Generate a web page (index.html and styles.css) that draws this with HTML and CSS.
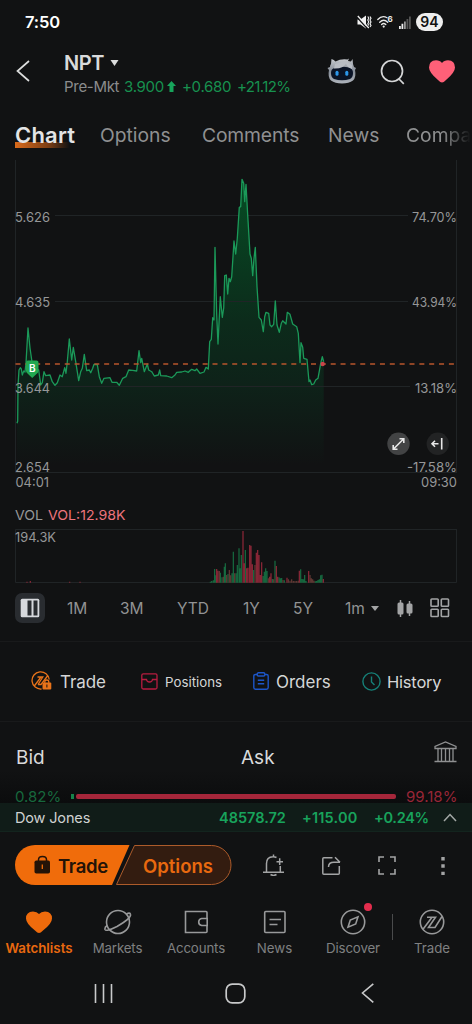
FILE: index.html
```html
<!DOCTYPE html>
<html lang="en">
<head>
<meta charset="utf-8">
<title>NPT</title>
<link rel="stylesheet" href="styles.css">
</head>
<body>
<div class="screen">
  <header class="status">
    <span class="clock">7:50</span>
    <svg class="st-mute" width="15" height="14" viewBox="0 0 15 14"><path d="M.5 4.500h3L9 .5v13L3.500 9.500h-3z" fill="#f2f2f2"/><path d="M0 2.200l10 11" stroke="#111213" stroke-width="1.300"/><path d="M.8 1l11 12" stroke="#f2f2f2" stroke-width="1.300"/><path d="M10.800 1.500l1 1.800-1 1.800 1 1.800-1 1.800 1 1.800M13 1.500l1 1.800-1 1.800 1 1.800-1 1.800 1 1.800-1 1.500" stroke="#f2f2f2" stroke-width="1.100" fill="none"/></svg>
    <svg class="st-wifi" width="16" height="14" viewBox="0 0 16 14"><g fill="none" stroke="#e8e8e8" stroke-width="1.300" stroke-linecap="round"><path d="M.8 4.500Q5-.2 10 2.700M2.700 7.200q4-3.800 8 0M4.600 9.500q2.100-1.900 4.200 0"/></g><circle cx="6.700" cy="11.600" r="1.100" fill="#e8e8e8"/><text x="10.500" y="6.800" class="wifi-six">6</text></svg>
    <svg class="st-signal" width="12" height="13" viewBox="0 0 12 13"><path d="M0 10h1.800v3H0zM2.500 7.800h1.800V13H2.500z" fill="#eee"/><path d="M5 5.500h1.800V13H5z" fill="#999"/><path d="M7.500 3h1.800v10H7.500zM10 .5h1.800V13H10z" fill="#555"/></svg>
    <span class="battery">94</span>
  </header>

  <section class="head">
    <svg class="back" width="14" height="22" viewBox="0 0 14 22"><path d="M13 1L1.500 11 13 21" fill="none" stroke="#dcdddd" stroke-width="1.700"/></svg>
    <div class="quote">
      <div class="symbol">NPT<svg width="9" height="6" viewBox="0 0 9 6"><path d="M.5 0h8L4.500 6z" fill="#dcdddd"/></svg></div>
      <div class="price"><span class="mkt">Pre-Mkt</span><span class="last">3.900</span><svg width="9" height="11" viewBox="0 0 9 11"><path d="M4.500 0L9 5H6.500v6h-4V5H0z" fill="#17a45b"/></svg><span class="chg">+0.680</span><span class="pct">+21.12%</span></div>
    </div>
    <svg class="robot" width="30" height="26" viewBox="0 0 30 26">
      <defs><linearGradient id="shell" x1="0" x2="0" y1="0" y2="1"><stop offset="0" stop-color="#c9ccd1"/><stop offset=".5" stop-color="#868d98"/><stop offset="1" stop-color="#aeb3bb"/></linearGradient></defs>
      <path d="M3 9Q3 7 4 6L4.500 1Q7 1.500 8.500 3.500 14 .5 20.500 1.500L22 .5 21 3 24 3.500 25.500 1 26 6 27 9l2 1-1 2q1.500 7-2 10.500Q22 25.500 15 25.500T4 22.500Q.5 19 2 12L.5 10z" fill="url(#shell)"/>
      <path d="M8 10Q15 8 22 9.500q4 1 4 5.500t-3 6q-8 2.500-16 0-3-1.500-3-6t4-5z" fill="#0a1326"/>
      <path d="M7 10.500q9 .5 12-5 1 4 6 5.500V7L19 3 8 6z" fill="#b9bdc4"/>
      <rect x="8.500" y="12.800" width="3" height="5" rx="1.500" fill="#2b96ea"/><rect x="18.300" y="12.800" width="3" height="5" rx="1.500" fill="#2b96ea"/>
    </svg>
    <svg class="search" width="25" height="26" viewBox="0 0 25 26"><g fill="none" stroke="#d5d6d7" stroke-width="1.700"><circle cx="12" cy="12" r="10.500"/><path d="M18.500 19.500l5.300 5.300"/></g></svg>
    <svg class="fav" width="26" height="23" viewBox="0 0 26 23"><path d="M13 22.500Q11.500 22.500 9 20 0 12.500 0 7.500 0 .5 7 .2 11 .2 13 3 15 .2 19 .2 26 .5 26 7.500 26 12.500 17 20 14.500 22.500 13 22.500z" fill="#ff6078"/></svg>
  </section>

  <nav class="tabs">
    <span class="tab tab-on">Chart</span><span class="tab t-opt">Options</span><span class="tab t-com">Comments</span><span class="tab t-news">News</span><span class="tab t-comp">Company</span>
  </nav>

  <svg class="chart" width="472" height="430" viewBox="0 160 472 430">
    <defs>
      <linearGradient id="fill" gradientUnits="userSpaceOnUse" x1="0" x2="0" y1="180" y2="465"><stop offset="0" stop-color="#064c24"/><stop offset=".5" stop-color="#0c2b1b"/><stop offset=".72" stop-color="#0e2219"/><stop offset="1" stop-color="#111213"/></linearGradient>
    </defs>
    <g class="grid"><path d="M15.500 160V472.500H457M456.500 160V472.500M55 215.500H408M55 301.500H408M55 386.500H410M15.500 529.500H457M15.500 529.500V582.500H456.500V529.500"/></g>
    <path fill="url(#fill)" d="M17 465V423.300L18 386 19 370 20.300 367.700 21.300 369 22.300 375 23.700 371 25 372 26 363 28 328 30 348 32 362 36.700 370 38.700 370 40.700 385 42.300 382.700 44 371.700 45.700 375.700 50 375 52.300 381.700 55 385.300 57.300 382.700 60 375 62.300 376.700 64.700 367.700 66 373.300 67.300 361.700 69.300 339 71.700 360 73.300 347.300 75.700 361.700 78.700 380.700 80.700 371.700 82.300 368.300 84.300 354.300 86.700 370.700 89.300 370 90.700 372.700 92.700 368.300 94 364.300 97.300 364.700 99.300 376.700 101.700 383.300 104 378.300 110 377.700 112 382.300 116.700 382.300 119.300 385.300 122.700 378.300 126 376.700 128.700 370 132.700 370.300 136.700 371 139 350.700 140.700 362.700 141.700 358.300 144.300 371.700 147.300 364 148.700 370 151.700 371.700 154.300 376 158.300 375 159.700 370 160.700 375.700 171.700 377.700 175 375 176.700 372.300 191.700 369.300 195 370.700 196.700 369 200 373.300 204 372 206 367.300 208.300 369 209.700 341.700 211.300 339.300 212.700 317.700 214 320 215 247.300 216.700 315 218 344 220.300 296.700 222.300 317.300 223.700 308 224.700 275.700 226.300 275 227.700 294 229 278.300 230.300 281.700 231.700 276.700 234 241 235.700 254 237.300 238.300 239.300 207.300 240.700 206.700 242 179.300 243.700 183.300 244.700 201.700 246 184.300 247.700 215 250 254 251.300 258.300 252.700 275.700 254 258.300 255.300 247.300 257 286.700 259 317.300 261.300 320 263.300 331.700 264.700 316.700 266 312.300 268.700 313.300 270 325 271.700 326.700 273.700 324.300 275.300 301 277 325 279.300 332.300 281.300 323.300 282.700 320.700 286 324 287.300 312.300 290 314.300 292.700 324 296.700 326.700 298.300 333.300 300 362.700 301 342.700 302.700 347.300 303.700 358.300 307 359.300 309 381.700 311.700 384.700 313.700 384 315.700 380 318 378.300 320.700 363.300 322.300 356.700 323.700 361.700V465z"/>
    <g class="grid"><path d="M55 301.500H330M55 386.500H330"/></g>
    <path class="line" d="M17 423.300L17.700 421 18 386 19 370 20.300 367.700 21.300 369 22.300 375 23.700 371 25 372 26 363 28 328 30 348 32 362 36.700 370 38.700 370 40.700 385 42.300 382.700 44 371.700 45.700 375.700 50 375 52.300 381.700 55 385.300 57.300 382.700 60 375 62.300 376.700 64.700 367.700 66 373.300 67.300 361.700 69.300 339 71.700 360 73.300 347.300 75.700 361.700 78.700 380.700 80.700 371.700 82.300 368.300 84.300 354.300 86.700 370.700 89.300 370 90.700 372.700 92.700 368.300 94 364.300 97.300 364.700 99.300 376.700 101.700 383.300 104 378.300 110 377.700 112 382.300 116.700 382.300 119.300 385.300 122.700 378.300 126 376.700 128.700 370 132.700 370.300 136.700 371 139 350.700 140.700 362.700 141.700 358.300 144.300 371.700 147.300 364 148.700 370 151.700 371.700 154.300 376 158.300 375 159.700 370 160.700 375.700 166.700 376 171.700 377.700 175 375 176.700 372.300 181.700 372 185 371 188.300 372.300 191.700 369.300 195 370.700 196.700 369 200 373.300 204 372 206 367.300 208.300 369 209.700 341.700 211.300 339.300 212.700 317.700 214 320 215 247.300 216.700 315 218 344 220.300 296.700 222.300 317.300 223.700 308 224.700 275.700 226.300 275 227.700 294 229 278.300 230.300 281.700 231.700 276.700 234 241 235.700 254 237.300 238.300 239.300 207.300 240.700 206.700 242 179.300 243.700 183.300 244.700 201.700 246 184.300 247.700 215 250 254 251.300 258.300 252.700 275.700 254 258.300 255.300 247.300 257 286.700 259 317.300 261.300 320 263.300 331.700 264.700 316.700 266 312.300 268.700 313.300 270 325 271.700 326.700 273.700 324.300 275.300 301 277 325 279.300 332.300 281.300 323.300 282.700 320.700 286 324 287.300 312.300 290 314.300 292.700 324 296.700 326.700 298.300 333.300 300 362.700 301 342.700 302.700 347.300 303.700 358.300 307 359.300 309 381.700 310 380 311.700 384.700 313.700 384 315.700 380 318 378.300 320.700 363.300 322.300 356.700 323.700 361.700"/>
    <path d="M15.500 364H455" stroke="#b8562c" stroke-width="1.500" stroke-dasharray="5 4.850"/>
    <circle cx="322.700" cy="364" r="2.200" fill="#c9444c"/>
    <path d="M26 362.500q0-2 2-2h8.500q2 0 2 2V371q0 1.500-1.500 2.500L32.200 378 27.500 373.500Q26 372 26 371z" fill="#22a850"/>
    <text class="buy" x="32.200" y="371.500" text-anchor="middle">B</text>
    <g class="axis">
      <text x="15" y="222" textLength="35" lengthAdjust="spacingAndGlyphs">5.626</text>
      <text x="15" y="307" textLength="35" lengthAdjust="spacingAndGlyphs">4.635</text>
      <text x="15" y="393" textLength="35" lengthAdjust="spacingAndGlyphs">3.644</text>
      <text x="15" y="472" textLength="35" lengthAdjust="spacingAndGlyphs">2.654</text>
      <text x="15.500" y="486.500" textLength="33.500" lengthAdjust="spacingAndGlyphs">04:01</text>
      <text x="412" y="222" textLength="45" lengthAdjust="spacingAndGlyphs">74.70%</text>
      <text x="412" y="307" textLength="45" lengthAdjust="spacingAndGlyphs">43.94%</text>
      <text x="415" y="393" textLength="42" lengthAdjust="spacingAndGlyphs">13.18%</text>
      <text x="407" y="472" textLength="50" lengthAdjust="spacingAndGlyphs">-17.58%</text>
      <text x="421" y="486.500" textLength="36" lengthAdjust="spacingAndGlyphs">09:30</text>
      <text x="15" y="519.500" textLength="28" lengthAdjust="spacingAndGlyphs">VOL</text>
      <text class="vol" x="48" y="519.500" textLength="77.500" lengthAdjust="spacingAndGlyphs">VOL:12.98K</text>
      <text x="15" y="541.500" textLength="41" lengthAdjust="spacingAndGlyphs">194.3K</text>
    </g>
    <circle cx="398.500" cy="443.800" r="11.200" fill="#424344"/>
    <path d="M393.500 449l10-10M399.500 438.700h4.300v4.300M397.500 449.200h-4.300v-4.300" class="ctl"/>
    <circle cx="437.800" cy="443.800" r="11.200" fill="#222324"/>
    <path d="M432 443.800h6.500M435 440.800l-3 3 3 3M441.700 438v11.500" class="ctl"/>
    <g transform="translate(200 500) scale(.33333)" stroke-width="3.700">
      <path stroke="#176b40" d="M31 248V245M35 248V243M40 248V241M44 248V207M48 248V226M61 248V218M66 248V232M73 248V200M76 248V190M84 248V222M96 248V220M100 248V155M108 248V220M112 248V195M117 248V145M120 248V205M124 248V165M136 248V150M161 248V210M189 248V228M193 248V215M197 248V205M201 248V213M217 248V237M225 248V182M237 248V232M241 248V235M245 248V234M253 248V241M302 248V208M306 248V237M310 248V238M314 248V225M318 248V243M346 248V244M350 248V243M354 248V240M358 248V238M362 248V226M366 248V224"/>
      <path stroke="#8d2838" d="M50 248V207M54 248V212M129 248V93M133 248V190M140 248V205M144 248V203M149 248V135M153 248V137M157 248V193M169 248V158M173 248V150M177 248V165M181 248V225M185 248V187M209 248V230M213 248V220M229 248V198M233 248V230M261 248V233M298 248V212M326 248V213M370 248V237M-360 248v-3M-509 248v-5M-519 248v-3M-391 248v-3"/>
      <path stroke="#633934" d="M58 248V213M70 248V230M80 248V225M88 248V210M92 248V226M104 248V220M165 248V195M205 248V235M221 248V238M249 248V240M265 248V238M270 248V242M275 248V238M280 248V243M285 248V243M290 248V243M295 248V242M330 248V225M334 248V235M338 248V238M342 248V242"/>
    </g>
  </svg>

  <nav class="periods">
    <span class="mode"><svg width="20" height="20" viewBox="0 0 20 20"><rect x=".7" y=".7" width="18.600" height="18.600" rx="1.500" fill="#d7d9dd"/><path d="M7.500 2.500h4v15h-4zM13.500 2.500h4v15h-4z" fill="#292c30"/></svg></span>
    <span class="p p1">1M</span><span class="p p2">3M</span><span class="p p3">YTD</span><span class="p p4">1Y</span><span class="p p5">5Y</span><span class="p p6">1m</span>
    <svg class="caret" width="8" height="5" viewBox="0 0 8 5"><path d="M0 0h8L4 5z" fill="#a3a4a5"/></svg>
    <svg class="candles" width="16" height="17" viewBox="0 0 16 17"><path d="M3.500 0v17M12.500 1v15" stroke="#a3a4a5" stroke-width="1.500"/><rect x=".5" y="2.500" width="6" height="12" rx="1.500" fill="#a3a4a5"/><rect x="9.500" y="3.500" width="6" height="10" rx="1.500" fill="#a3a4a5"/></svg>
    <svg class="tiles" width="20" height="20" viewBox="0 0 20 20"><g fill="none" stroke="#a3a4a5" stroke-width="1.600"><rect x="1" y="1" width="7.200" height="7.200" rx=".8"/><rect x="11.300" y="1" width="7.200" height="7.200" rx=".8"/><rect x="1" y="11.300" width="7.200" height="7.200" rx=".8"/><rect x="11.300" y="11.300" width="7.200" height="7.200" rx=".8"/></g></svg>
  </nav>

  <section class="shortcuts">
    <svg class="s-trade" width="21" height="20" viewBox="0 0 21 20"><g fill="none" stroke="#e8731a" stroke-width="1.300"><path d="M10.500 18A8.600 8.600 0 1 1 18.200 8.500M6.500 6h5.300L7 13.500M3.300 15L10 6M7 13.500h3L16.500 5"/><path d="M13.800 12v-1q0-2 2-2t2 2v1"/></g><rect x="11.500" y="11.500" width="8.800" height="7" rx="1" fill="#e8731a"/><path d="M15.900 13.500v3" stroke="#111213"/></svg>
    <span class="sc sc1">Trade</span>
    <svg class="s-pos" width="17" height="17" viewBox="0 0 17 17"><g fill="none" stroke="#b71d40" stroke-width="1.300"><rect x=".8" y=".8" width="15.200" height="15.200" rx="1.500"/><path d="M1 6.500h4.500q.3 2.500 3 2.500t3-2.500H16"/></g></svg>
    <span class="sc sc2">Positions</span>
    <svg class="s-ord" width="16" height="18" viewBox="0 0 16 18"><g fill="none" stroke="#1d56c8" stroke-width="1.400"><path d="M4 2.500H2.500Q.8 2.500.8 4v11.500q0 1.700 1.700 1.700h11q1.700 0 1.700-1.700V4q0-1.500-1.700-1.500H12"/><rect x="4.200" y=".8" width="7.600" height="3.200" rx="1.200"/><path d="M4.800 8.300h6.400M4.800 11.800h6.400"/></g></svg>
    <span class="sc sc3">Orders</span>
    <svg class="s-his" width="19" height="19" viewBox="0 0 19 19"><g fill="none" stroke="#168078" stroke-width="1.400"><circle cx="9.500" cy="9.500" r="8.600"/><path d="M9.500 4.500v5.500l3 3"/></g></svg>
    <span class="sc sc4">History</span>
  </section>

  <section class="book">
    <div class="book-head"><span class="bid">Bid</span><span class="ask">Ask</span>
      <svg class="bank" width="23" height="22" viewBox="0 0 23 22"><path d="M1 7.500V5.500L11.500 1 22 5.500v2zM4 7.500v12.300M7.500 7.500v12.300M11.500 7.500v12.300M15.500 7.500v12.300M19 7.500v12.300M.5 20.500h22" fill="none" stroke="#8f9091" stroke-width="1.300"/></svg>
    </div>
    <div class="ratio"><span class="bidpct">0.82%</span><i class="bidbar"></i><i class="askbar"></i><span class="askpct">99.18%</span></div>
  </section>

  <section class="ticker"><span class="dj">Dow Jones</span><b class="n1">48578.72</b><b class="n2">+115.00</b><b class="n3">+0.24%</b><svg width="14" height="9" viewBox="0 0 14 9"><path d="M1 8l6-6.500L13 8" fill="none" stroke="#a3a8a6" stroke-width="1.500"/></svg></section>

  <section class="actions">
    <div class="pill">
      <svg class="pill-bg" width="217" height="41" viewBox="0 0 217 41"><path d="M20 0H114.500L97 40H20A20 20 0 0 1 20 0z" fill="#f06c0b"/><path d="M119.500.5H196.500a19.500 19.500 0 0 1 0 39H101.500z" fill="#331c10" stroke="#ad5b2a" stroke-width="1"/><path d="M23.500 16v-1.300q0-3.200 4-3.200t4 3.200V16" fill="none" stroke="#241307" stroke-width="1.500"/><rect x="19.500" y="15.500" width="15.500" height="13" rx="1.800" fill="#241307"/><path d="M27.300 19.500v4.500" stroke="#f06c0b" stroke-width="1.300"/></svg>
      <span class="do-trade">Trade</span><span class="do-opt">Options</span>
    </div>
    <svg class="a-bell" width="21" height="22" viewBox="0 0 21 22"><g fill="none" stroke="#a3a4a5" stroke-width="1.500"><path d="M0 18.200h21M3.500 18V9.500Q3.500 2.800 10 2.700q2 0 3.500.8M10.500.5v2M17.300 12v6M13.500 7.700h6.500M16.700 4.300v6.800M7.500 20.500q3 1.800 6 0"/></g></svg>
    <svg class="a-share" width="19" height="20" viewBox="0 0 19 20"><g fill="none" stroke="#a3a4a5" stroke-width="1.500"><path d="M10.500 1.800H1.800q-1 0-1 1v14.500q0 1 1 1h14.500q1 0 1-1V10M6.500 11q0-4.700 5.500-4.700h6M13 1.300l5 5"/></g></svg>
    <svg class="a-full" width="18" height="19" viewBox="0 0 18 19"><path d="M6 1H1v5M12 1h5v5M17 13v5h-5M6 18H1v-5" fill="none" stroke="#a3a4a5" stroke-width="1.600"/></svg>
    <svg class="a-more" width="4" height="20" viewBox="0 0 4 20"><path d="M.3 1h3.400v3.400H.3zM.3 8.300h3.400v3.400H.3zM.3 15.700h3.400v3.400H.3z" fill="#a3a4a5"/></svg>
  </section>

  <nav class="dock">
    <div class="d d1"><svg width="26" height="26" viewBox="0 0 26 26"><path d="M13 24Q11.500 24 9 21.500 0 14.500 0 9.500 0 2.800 7 2.500 11 2.500 13 5 15 2.500 19 2.500 26 2.800 26 9.500 26 14.500 17 21.500 14.500 24 13 24z" fill="#ef6b0c"/></svg><span>Watchlists</span></div>
    <div class="d d2"><svg width="28" height="26" viewBox="0 0 28 26"><g fill="none" stroke="#98999a" stroke-width="1.600"><circle cx="14" cy="13" r="11.500"/><path d="M3.200 16.500Q.5 18 1 20.500q1 2.500 12-3Q27.500 9 26.500 5.500 26 3 22.500 5"/></g></svg><span>Markets</span></div>
    <div class="d d3"><svg width="24" height="26" viewBox="0 0 24 26"><g fill="none" stroke="#98999a" stroke-width="1.600"><path d="M23 10V3.500q0-1-1-1H1.500v21H22q1 0 1-1V17M23.200 9.500h-5.500q-3 .5-3 3.500t3 3.500h5.500z"/></g></svg><span>Accounts</span></div>
    <div class="d d4"><svg width="24" height="26" viewBox="0 0 24 26"><g fill="none" stroke="#98999a" stroke-width="1.600"><rect x="1.700" y="2.500" width="20.300" height="21" rx="1"/><path d="M6.500 10.500h11.500M6.500 15.500h8"/></g></svg><span>News</span></div>
    <div class="d d5"><svg width="26" height="26" viewBox="0 0 26 26"><g fill="none" stroke="#98999a" stroke-width="1.600"><circle cx="13" cy="13" r="11.700"/><path d="M18 7.800l-2.300 7.200L8 18.200 10.300 11z"/></g></svg><span>Discover</span><i class="dot"></i></div>
    <i class="sep"></i>
    <div class="d d6"><svg width="26" height="26" viewBox="0 0 26 26"><g fill="none" stroke="#98999a" stroke-width="1.600"><circle cx="13" cy="13" r="11.700"/><path d="M4.200 20L13 8.300M8 8.300h8.500L9.500 18.500H16L23 7.500"/></g></svg><span>Trade</span></div>
  </nav>

  <footer class="sys">
    <svg class="recent" width="20" height="20" viewBox="0 0 20 20"><path d="M1.500 1v19M9.500 1v19M17.500 1v19" stroke="#c8c9ca" stroke-width="1.600"/></svg>
    <svg class="home" width="21" height="21" viewBox="0 0 21 21"><rect x="1.200" y="1.200" width="18.600" height="18.600" rx="6" fill="none" stroke="#c8c9ca" stroke-width="1.700"/></svg>
    <svg class="prev" width="13" height="20" viewBox="0 0 13 20"><path d="M12.300.8L1.500 10l10.800 9.300" fill="none" stroke="#c8c9ca" stroke-width="1.600"/></svg>
  </footer>
</div>
</body>
</html>
```
FILE: styles.css
```css
* { box-sizing: border-box; }
body { margin: 0; background: #111213; }
.screen { width: 472px; height: 1024px; overflow: hidden; background: #111213; color: #d9dadb; font-family: Inter, "Noto Sans", sans-serif; white-space: nowrap; display: flex; flex-direction: column; }
svg { display: block; flex: none; }
span, b { flex: none; }

.status { height: 44px; display: flex; align-items: center; padding-left: 25px; flex: none; }
.clock { width: 332px; font-size: 16.5px; font-weight: 600; color: #fff; letter-spacing: -.1px; }
.st-wifi { margin-left: 5px; }
.st-signal { margin-left: 6px; }
.battery { margin-left: 5px; width: 27px; height: 18px; border-radius: 9px; background: #eee; color: #111; font-size: 14px; line-height: 18px; font-weight: 600; text-align: center; }
.wifi-six { font-size: 8px; font-weight: 700; fill: #eee; }

.head { height: 64px; display: flex; align-items: flex-start; padding-left: 16px; flex: none; }
.back { margin-top: 16px; }
.quote { margin-left: 34px; width: 263px; padding-top: 7px; }
.symbol { display: flex; align-items: center; height: 24px; font-size: 20px; font-weight: 600; gap: 6px; letter-spacing: -.4px; }
.price { display: flex; align-items: center; height: 23px; font-size: 15px; color: #17914f; }
.mkt { width: 60px; color: #8b8c8d; letter-spacing: -.3px; }
.last { width: 43px; letter-spacing: -.3px; }
.chg { margin-left: 6px; width: 55px; letter-spacing: -.3px; }
.pct { letter-spacing: -.6px; }
.robot { margin-top: 14px; }
.search { margin: 15px 0 0 23px; }
.fav { margin: 16px 0 0 24px; }

.tabs { height: 52px; display: flex; padding: 15px 0 0 15px; flex: none; overflow: hidden; font-size: 19.3px; color: #8f9091; line-height: 25px; }
.tab { height: 25px; }
.tab-on { width: 85px; font-size: 22px; font-weight: 600; color: #e3e4e5; background: linear-gradient(90deg, #d96a1b, #7a3d15 40%, #111213 64%) 0 100% / 85px 6px no-repeat; letter-spacing: .2px; }
.t-opt { width: 102px; }
.t-com { width: 126px; letter-spacing: -.15px; }
.t-news { width: 78px; }
.t-comp { width: 66px; overflow: hidden; -webkit-mask-image: linear-gradient(90deg, #000 55%, transparent 98%); mask-image: linear-gradient(90deg, #000 55%, transparent 98%); }

.chart { font-family: Inter, "Noto Sans", sans-serif; }
.grid path { fill: none; stroke: #202426; stroke-width: 1; }
.line { fill: none; stroke: #1b9959; stroke-width: 1.3; stroke-linejoin: round; }
.buy { font-size: 10px; font-weight: 600; fill: #fff; }
.axis { font-size: 13.5px; fill: #969798; }
.axis .vol { fill: #ed747d; }
.ctl { fill: none; stroke: #e7e7e7; stroke-width: 1.6; }

.periods { height: 51px; display: flex; align-items: center; padding: 0 0 15px 15px; flex: none; font-size: 15.5px; color: #929394; }
.mode { width: 30px; height: 30px; border-radius: 7px; background: #292c30; display: grid; place-items: center; margin-right: 22px; }
.p1 { width: 53px; } .p2 { width: 57px; } .p3 { width: 66px; } .p4 { width: 50px; } .p5 { width: 52px; } .p6 { width: 26px; }
.candles { margin-left: 18px; }
.tiles { margin-left: 17px; }

.shortcuts { height: 81px; display: flex; align-items: center; padding: 1px 0 0 31px; flex: none; border-top: 1px solid #191a1b; border-bottom: 1px solid #191a1b; font-size: 17px; color: #d5d6d7; }
.shortcuts svg { margin-top: -2px; }
.sc1 { margin-left: 8px; width: 81px; letter-spacing: -.1px; }
.sc2 { margin-left: 7px; width: 88px; font-size: 13.3px; }
.sc3 { margin-left: 7px; width: 86px; }
.sc4 { margin-left: 6px; font-size: 16.5px; letter-spacing: -.2px; }

.book { height: 81px; flex: none; overflow: hidden; background: linear-gradient(#111213 60%, #0b0c0d); }
.book-head { height: 64px; display: flex; align-items: center; padding: 7px 0 0 16px; font-size: 19px; }
.bid { width: 225px; } .ask { width: 193px; }
.bank { margin-top: -12px; }
.ratio { height: 20px; display: flex; align-items: center; padding-left: 15px; font-size: 15px; }
.bidpct { width: 56px; color: #17683d; }
.askpct { margin-left: 10px; color: #982637; }
.bidbar { width: 3px; height: 5px; background: #17834a; }
.askbar { margin-left: 2px; width: 320px; height: 5px; background: #a5263a; border-radius: 2px; }

.ticker { height: 29px; flex: none; display: flex; align-items: center; padding: 1px 0 0 15px; background: #101c18; border-bottom: 1px solid #13241e; font-size: 14.5px; color: #18a35c; }
.ticker b { font-weight: 600; }
.dj { width: 204px; color: #cfd2d1; letter-spacing: -.15px; }
.n1 { width: 83px; } .n2 { width: 72px; letter-spacing: .2px; } .n3 { width: 69px; letter-spacing: -.3px; }

.actions { height: 68px; flex: none; display: flex; padding-left: 15px; }
.pill { display: grid; width: 217px; height: 41px; margin-top: 13px; grid-template-columns: 43px 85px 89px; align-items: center; font-size: 18.5px; font-weight: 600; }
.pill-bg { grid-area: 1 / 1 / 2 / 4; }
.do-trade { grid-area: 1 / 2; color: #241307; letter-spacing: -.3px; }
.do-opt { grid-area: 1 / 3; color: #e8690f; }
.a-bell { margin: 22px 0 0 31px; }
.a-share { margin: 24px 0 0 38px; }
.a-full { margin: 24px 0 0 37px; }
.a-more { margin: 24px 0 0 45px; }

.dock { height: 62px; flex: none; display: flex; padding-top: 9px; font-size: 13.3px; color: #7f8081; }
.d { position: relative; display: flex; flex-direction: column; align-items: center; line-height: 20px; gap: 3px; flex: none; }
.d1 { width: 78px; color: #e9690f; font-weight: 600; }
.d2 { width: 79px; } .d3 { width: 78px; } .d4 { width: 79px; } .d5 { width: 78px; } .d6 { width: 78px; }
.d2 span, .d3 span, .d5 span { letter-spacing: -.15px; }
.dot { position: absolute; left: 50px; top: -6px; width: 8px; height: 8px; border-radius: 50%; background: #e32d4d; }
.sep { width: 1px; height: 26px; margin-top: 5px; background: #4a4b4c; }

.sys { height: 62px; flex: none; display: flex; align-items: center; padding-left: 94px; }
.home { margin-left: 111px; }
.prev { margin-left: 115px; }
```
